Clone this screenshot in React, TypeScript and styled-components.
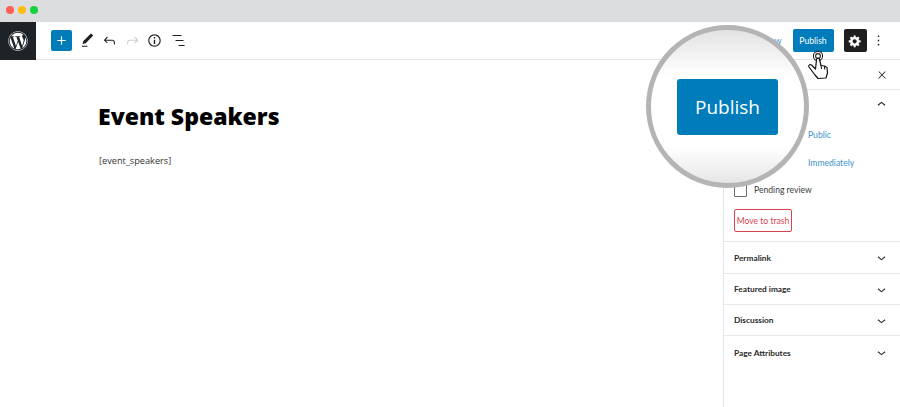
import React from "react";
import styled, { createGlobalStyle } from "styled-components";
import { FaWordpress } from "react-icons/fa";

const Global = createGlobalStyle`
  html, body { margin: 0; padding: 0; background: #fff; }
  body { font-family: "Open Sans", "Noto Sans", sans-serif; }
  * { box-sizing: border-box; }
`;

const Page = styled.div`
  position: relative;
  width: 900px;
  height: 407px;
  overflow: hidden;
  display: flex;
  flex-direction: column;
`;

const WindowBar = styled.div`
  height: 22px;
  flex: none;
  background: #dcdddf;
  display: flex;
  align-items: center;
  gap: 4px;
  padding: 0 0 2px 6px;
`;

const Dot = styled.span<{ $c: string }>`
  width: 8px;
  height: 8px;
  border-radius: 50%;
  background: ${(p) => p.$c};
`;

const Toolbar = styled.header`
  height: 38px;
  flex: none;
  display: flex;
  align-items: center;
  border-bottom: 1px solid #e2e4e7;
  padding-right: 10px;
`;

const Logo = styled.div`
  width: 36px;
  height: 38px;
  flex: none;
  background: #1e2327;
  color: #fff;
  display: flex;
  align-items: center;
  justify-content: center;
  font-size: 20px;
`;

const Tools = styled.div`
  display: flex;
  align-items: center;
  margin-left: 15px;
`;

const AddButton = styled.div`
  width: 21px;
  height: 21px;
  background: #007cba;
  color: #fff;
  border-radius: 2px;
  display: flex;
  align-items: center;
  justify-content: center;
  margin-right: 4px;
`;

const ToolIcon = styled.div<{ $faded?: boolean }>`
  width: 22.5px;
  height: 22px;
  color: ${(p) => (p.$faded ? "#c9cccf" : "#1e1e1e")};
  display: flex;
  align-items: center;
  justify-content: center;
`;

const Actions = styled.div`
  margin-left: auto;
  display: flex;
  align-items: center;
`;

const Preview = styled.span`
  font-family: "Lato", sans-serif;
  font-size: 8.6px;
  color: #3d94c9;
  margin-right: 11px;
`;

const PublishSmall = styled.div`
  width: 41px;
  height: 23px;
  background: #007cba;
  color: #fff;
  border-radius: 2px;
  font-family: "Lato", sans-serif;
  font-size: 8.6px;
  display: flex;
  align-items: center;
  justify-content: center;
  margin-right: 10px;
`;

const GearButton = styled.div`
  width: 23px;
  height: 23px;
  background: #1e1e1e;
  color: #fff;
  border-radius: 2px;
  display: flex;
  align-items: center;
  justify-content: center;
  margin-right: 1px;
`;

const Body = styled.div`
  flex: 1;
  display: flex;
  min-height: 0;
`;

const Editor = styled.main`
  flex: 1;
  padding: 38px 0 0 99px;
`;

const Title = styled.h1`
  margin: 0 0 0 -1px;
  font-family: "Noto Sans", sans-serif;
  font-weight: 900;
  font-size: 23px;
  line-height: 36px;
  color: #000;
`;

const Shortcode = styled.p`
  margin: 20px 0 0;
  font-size: 9.2px;
  line-height: 14px;
  color: #333;
`;

const Sidebar = styled.aside`
  width: 177px;
  flex: none;
  border-left: 1px solid #e2e4e7;
  display: flex;
  flex-direction: column;
  font-family: "Lato", sans-serif;
  font-size: 8.6px;
`;

const SideHead = styled.div`
  height: 30px;
  flex: none;
  display: flex;
  align-items: center;
  justify-content: flex-end;
  padding: 0 12px 0 10px;
  border-bottom: 1px solid #e7e8ea;
  color: #1e1e1e;
`;

const StatusPanel = styled.section`
  height: 152px;
  flex: none;
  padding: 0 10px;
  border-bottom: 1px solid #e7e8ea;
  display: flex;
  flex-direction: column;
`;

const PanelHead = styled.div`
  height: 31px;
  flex: none;
  padding-bottom: 2px;
  display: flex;
  align-items: center;
  justify-content: flex-end;
  color: #1e1e1e;
`;

const Field = styled.div`
  height: 28px;
  flex: none;
  display: flex;
  align-items: center;
  padding-left: 74px;
  color: #3d94c9;
`;

const CheckRow = styled.label`
  display: flex;
  align-items: center;
  gap: 7px;
  height: 14px;
  margin-top: 6px;
  color: #3b3b3b;
`;

const Box = styled.span`
  width: 13px;
  height: 13px;
  border: 1px solid #6b6b6b;
  border-radius: 1px;
`;

const TrashButton = styled.div`
  width: 58px;
  height: 23px;
  margin-top: 12px;
  border: 1px solid #d8434f;
  border-radius: 2px;
  color: #d8434f;
  display: flex;
  align-items: center;
  justify-content: center;
  white-space: nowrap;
`;

const Row = styled.div<{ $h: number; $last?: boolean }>`
  height: ${(p) => p.$h}px;
  flex: none;
  display: flex;
  align-items: center;
  justify-content: space-between;
  padding: 0 10px;
  border-bottom: ${(p) => (p.$last ? "none" : "1px solid #e7e8ea")};
  font-size: 8.3px;
  font-weight: 700;
  color: #2a2a2a;
`;

const Lens = styled.div`
  position: absolute;
  left: 646px;
  top: 25px;
  width: 163px;
  height: 163px;
  border-radius: 50%;
  border: 5px solid #b4b4b4;
  background: linear-gradient(#e2e2e2 0%, #fff 30%, #fff 76%, #e6e6e6 100%);
  display: flex;
  align-items: center;
  justify-content: center;
`;

const LensButton = styled.div`
  width: 101px;
  height: 56px;
  padding: 1px 0 0 1px;
  background: #007cba;
  color: #fff;
  border-radius: 3px;
  font-size: 19px;
  display: flex;
  align-items: center;
  justify-content: center;
  margin: 0 1px 0 0;
`;

const Cursor = styled.svg`
  position: absolute;
  left: 806px;
  top: 50px;
  width: 24px;
  height: 30px;
`;

const Glyph = ({ d, size = 18, box = 24 }: { d: string; size?: number; box?: number }) => (
  <svg width={size} height={size} viewBox={`0 0 ${box} ${box}`} fill="currentColor" aria-hidden="true">
    <path d={d} />
  </svg>
);

const paths = {
  plus: "M18 11.2h-5.2V6h-1.6v5.2H6v1.6h5.2V18h1.6v-5.2H18z",
  pen: "M20.1 5.1L16.9 2 6.2 12.7l-1.3 4.4 4.5-1.3L20.1 5.1zM4 20.8h8v-1.5H4v1.5z",
  undo: "M18.3 11.7c-.6-.6-1.4-.9-2.3-.9H6.7l2.9-3.3-1.1-1-4.5 5L8.5 16l1-1-2.7-2.7H16c.5 0 .9.2 1.3.5 1 1 1 3.4 1 4.5v.3h1.5v-.2c0-1.5 0-4.3-1.5-5.7z",
  redo: "M15.6 6.5l-1.1 1 2.9 3.3H8c-.9 0-1.7.3-2.3.9-1.4 1.5-1.4 4.2-1.4 5.6v.2h1.5v-.3c0-1.1 0-3.5 1-4.5.3-.3.7-.5 1.3-.5h9.2L14.5 15l1.1 1.1 4.6-4.6-4.6-5z",
  info: "M12 3.2c-4.8 0-8.8 3.9-8.8 8.8 0 4.8 3.9 8.8 8.8 8.8 4.8 0 8.8-3.9 8.8-8.8 0-4.8-4-8.8-8.8-8.8zm0 16c-4 0-7.2-3.3-7.2-7.2C4.8 8 8 4.8 12 4.8s7.2 3.3 7.2 7.2c0 4-3.2 7.2-7.2 7.2zM11 17h2v-6h-2v6zm0-8h2V7h-2v2z",
  list: "M5 4.3h12.6v1.5H5zM9.2 11.3h11.3v1.5H9.2zM13.4 18.3H22v1.5h-8.6z",
  cog: "M18 12h-2.18c-.17.7-.44 1.35-.81 1.93l1.54 1.54-2.1 2.1-1.54-1.54c-.58.36-1.23.63-1.91.79V19H8v-2.18c-.68-.16-1.33-.43-1.91-.79l-1.54 1.54-2.12-2.12 1.54-1.54c-.36-.58-.63-1.23-.79-1.91H1V9.03h2.17c.16-.7.44-1.35.8-1.94L2.43 5.55l2.1-2.1 1.54 1.54c.58-.37 1.24-.64 1.93-.81V2h3v2.18c.68.16 1.33.43 1.91.79l1.54-1.54 2.12 2.12-1.54 1.54c.36.59.64 1.24.8 1.94H18V12zm-8.5 1.5c1.66 0 3-1.34 3-3s-1.34-3-3-3-3 1.34-3 3 1.34 3 3 3z",
  more: "M13 19h-2v-2h2v2zm0-6h-2v-2h2v2zm0-6h-2V5h2v2z",
  close: "M13 11.8l6.1-6.3-1-1-6.1 6.2-6.1-6.3-1 1 6.1 6.3-6.5 6.7 1 1 6.5-6.6 6.5 6.6 1-1z",
  down: "M17.5 11.6L12 16l-5.5-4.4.9-1.2L12 14l4.5-3.6 1 1.2z",
  up: "M6.5 12.4L12 8l5.5 4.4-.9 1.2L12 10l-4.5 3.6-1-1.2z",
};

const rows = [
  { label: "Permalink", h: 32 },
  { label: "Featured image", h: 31 },
  { label: "Discussion", h: 31 },
  { label: "Page Attributes", h: 33, last: true },
];

export default function App() {
  return (
    <Page>
      <Global />
      <WindowBar>
        <Dot $c="#ff5f52" />
        <Dot $c="#ffbd14" />
        <Dot $c="#16d23c" />
      </WindowBar>
      <Toolbar>
        <Logo>
          <FaWordpress />
        </Logo>
        <Tools>
          <AddButton>
            <Glyph d={paths.plus} size={17} />
          </AddButton>
          <ToolIcon><Glyph d={paths.pen} size={17} /></ToolIcon>
          <ToolIcon><Glyph d={paths.undo} size={17} /></ToolIcon>
          <ToolIcon $faded><Glyph d={paths.redo} size={17} /></ToolIcon>
          <ToolIcon><Glyph d={paths.info} size={17} /></ToolIcon>
          <ToolIcon><Glyph d={paths.list} size={17} /></ToolIcon>
        </Tools>
        <Actions>
          <Preview>Preview</Preview>
          <PublishSmall>Publish</PublishSmall>
          <GearButton><Glyph d={paths.cog} size={14} box={20} /></GearButton>
          <ToolIcon><Glyph d={paths.more} size={17} /></ToolIcon>
        </Actions>
      </Toolbar>
      <Body>
        <Editor>
          <Title>Event Speakers</Title>
          <Shortcode>[event_speakers]</Shortcode>
        </Editor>
        <Sidebar>
          <SideHead>
            <Glyph d={paths.close} size={12} />
          </SideHead>
          <StatusPanel>
            <PanelHead>
              <Glyph d={paths.up} size={17} />
            </PanelHead>
            <Field>Public</Field>
            <Field>Immediately</Field>
            <CheckRow>
              <Box />
              Pending review
            </CheckRow>
            <TrashButton>Move to trash</TrashButton>
          </StatusPanel>
          {rows.map((r) => (
            <Row key={r.label} $h={r.h} $last={r.last}>
              <span>{r.label}</span>
              <Glyph d={paths.down} size={17} />
            </Row>
          ))}
        </Sidebar>
      </Body>
      <Lens>
        <LensButton>Publish</LensButton>
      </Lens>
      <Cursor viewBox="0 0 24 30" aria-hidden="true">
        <g fill="none" stroke="#222" strokeWidth="1.1">
          <circle cx="12" cy="6" r="4.6" />
          <circle cx="12" cy="6" r="2.4" />
        </g>
        <path
          d="M10.5 10C10.3 8 13 7.5 13.5 9.5L15 15.5L18.5 16L21 17.5L21.5 23L20 28L12 28.5L9 25L3 17C2 15 4 14 5.5 15L9.5 19Z"
          fill="#fff"
          stroke="#111"
          strokeWidth="1.2"
          strokeLinejoin="round"
        />
        <path d="M15 15.5L15.6 19M18.5 16L18.7 19.5" fill="none" stroke="#111" strokeWidth="1" />
      </Cursor>
    </Page>
  );
}
